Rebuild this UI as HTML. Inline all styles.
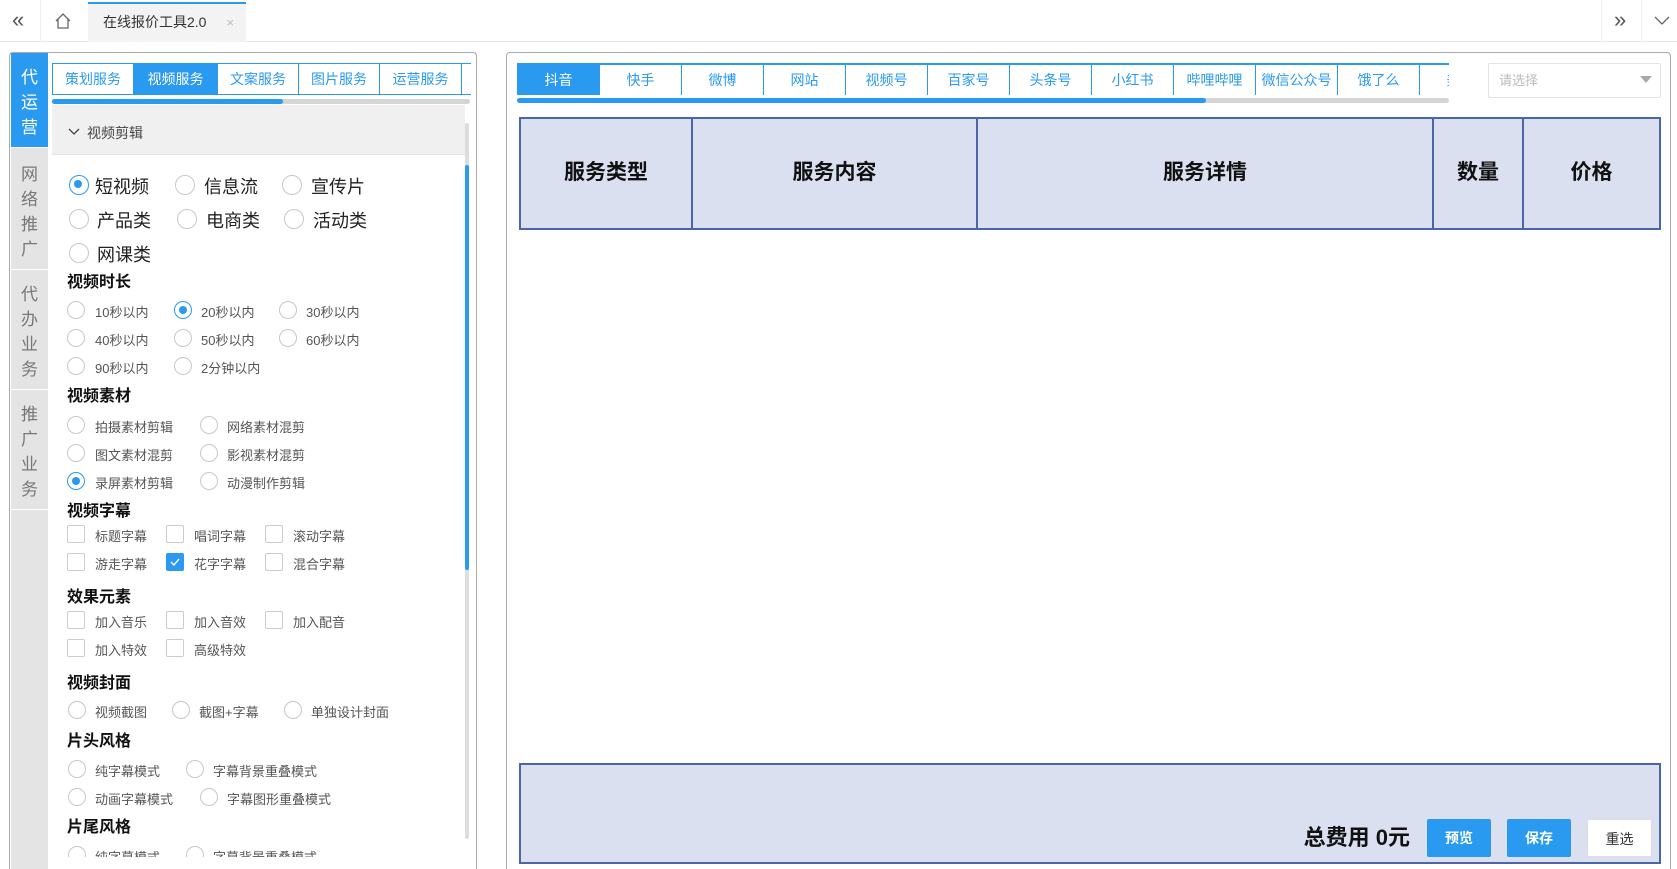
<!DOCTYPE html>
<html style="overflow:hidden;width:1677px;height:869px"><head><meta charset="utf-8"><style>
*{margin:0;padding:0;box-sizing:border-box}
body{width:1677px;height:869px;overflow:hidden;background:#fff;font-family:"Liberation Sans","Noto Sans CJK SC",sans-serif;position:relative;color:#333}
.a{position:absolute}
.top{left:0;top:0;width:1677px;height:42px;border-bottom:1px solid #e8e8e8;background:#fff}
.vl{width:1px;background:#eee;top:0;height:42px}
.tab{left:88px;top:2px;width:158px;height:40px;background:#f3f3f3;border-top:2px solid #2a9af0;font-size:14px;line-height:36px;padding-left:15px;color:#333}
.panel{border:1px solid #aaa;border-bottom:none;border-radius:4px 4px 0 0;background:#fff}
.nav{left:11px;width:37px;background:#e4e4e4;color:#777;font-size:17px;text-align:center;line-height:25px;border-bottom:1px solid #fff}
.lt{top:63px;height:32px;border:1px solid #2a9af0;color:#2a9af0;font-size:14px;text-align:center;line-height:30px;background:#fff}
.rt{flex:0 0 82px;height:32px;border:1px solid #2a9af0;border-left:none;color:#2a9af0;font-size:14px;text-align:center;line-height:30px;background:#fff;width:82px}
.on{background:#2a9af0;color:#fff}
.h{font-size:16px;font-weight:bold;color:#111}
.r{width:18px;height:18px;border:1px solid #c8c8c8;border-radius:50%;background:#fff}
.rs{border-color:#2a9af0}
.rs::after{content:"";position:absolute;left:4px;top:4px;width:8px;height:8px;border-radius:50%;background:#2a9af0}
.c{width:18px;height:18px;border:1px solid #ccc;border-radius:2px;background:#fff}
.t{font-size:13px;color:#555;white-space:nowrap}
.tb{font-size:18px;color:#222;white-space:nowrap}
.th{top:117px;height:113px;background:#dae0f0;border:2px solid #4a66a8;font-size:21px;font-weight:bold;color:#111;text-align:center;line-height:108px}
.btn{top:819px;height:38px;width:64px;background:#2a9af0;color:#fff;font-size:14px;text-align:center;line-height:38px;border-radius:2px;font-weight:bold}
</style></head><body>
<div class="a top"></div>
<div class="a" style="left:12px;top:9px;font-size:22px;color:#555;line-height:22px">«</div>
<div class="a vl" style="left:40px"></div>
<svg class="a" style="left:54px;top:12px" width="18" height="18" viewBox="0 0 18 18"><path d="M2 9 L9 2 L16 9 M4 7 V16 H14 V7" fill="none" stroke="#666" stroke-width="1.3"/></svg>
<div class="a tab">在线报价工具2.0<span style="color:#bbb;margin-left:20px;font-size:13px">×</span></div>
<div class="a vl" style="left:1601px"></div>
<div class="a vl" style="left:1641px"></div>
<div class="a" style="left:1614px;top:9px;font-size:22px;color:#555;line-height:22px">»</div>
<svg class="a" style="left:1654px;top:16px" width="16" height="10"><path d="M1 1 L8 8 L15 1" fill="none" stroke="#666" stroke-width="1.3"/></svg>

<!-- left panel -->
<div class="a panel" style="left:9px;top:52px;width:468px;height:817px"></div>
<div class="a nav" style="top:53px;height:95px;background:#2a9af0;color:#fff;padding-top:12px">代<br>运<br>营</div>
<div class="a nav" style="top:148px;height:122px;padding-top:14px">网<br>络<br>推<br>广</div>
<div class="a nav" style="top:270px;height:120px;padding-top:12px">代<br>办<br>业<br>务</div>
<div class="a nav" style="top:390px;height:120px;padding-top:12px">推<br>广<br>业<br>务</div>
<div class="a nav" style="top:510px;height:359px;border:none"></div>
<div class="a lt" style="left:52px;width:82px">策划服务</div>
<div class="a lt on" style="left:133px;width:85px">视频服务</div>
<div class="a lt" style="left:217px;width:82px">文案服务</div>
<div class="a lt" style="left:298px;width:82px">图片服务</div>
<div class="a lt" style="left:379px;width:83px">运营服务</div>
<div class="a lt" style="left:461px;width:10px;border-right:none"></div>
<div class="a" style="left:52px;top:99px;width:418px;height:5px;background:#d5d5d5;border-radius:3px"></div>
<div class="a" style="left:52px;top:99px;width:231px;height:5px;background:#2a9af0;border-radius:3px"></div>
<div class="a" style="left:52px;top:105px;width:413px;height:50px;background:#f0f0f0;border-bottom:1px solid #e4e4e4"></div>
<svg class="a" style="left:68px;top:128px" width="12" height="8"><path d="M1 1 L6 6 L11 1" fill="none" stroke="#444" stroke-width="1.3"/></svg>
<div class="a" style="left:87px;top:123px;font-size:14px;color:#444">视频剪辑</div>
<div class="a" style="left:465px;top:123px;width:4px;height:716px;background:#ddd;border-radius:2px"></div>
<div class="a" style="left:465px;top:165px;width:4px;height:405px;background:#2a9af0;border-radius:2px"></div>

<div class="a" style="left:0;top:0;width:477px;height:857px;overflow:hidden">
<div class="a r rs" style="left:69px;top:175px;width:20px;height:20px"></div><div class="a tb" style="left:95px;top:173px">短视频</div>
<div class="a r" style="left:175px;top:175px;width:20px;height:20px"></div><div class="a tb" style="left:204px;top:173px">信息流</div>
<div class="a r" style="left:282px;top:175px;width:20px;height:20px"></div><div class="a tb" style="left:311px;top:173px">宣传片</div>
<div class="a r" style="left:69px;top:209px;width:20px;height:20px"></div><div class="a tb" style="left:97px;top:207px">产品类</div>
<div class="a r" style="left:177px;top:209px;width:20px;height:20px"></div><div class="a tb" style="left:206px;top:207px">电商类</div>
<div class="a r" style="left:284px;top:209px;width:20px;height:20px"></div><div class="a tb" style="left:313px;top:207px">活动类</div>
<div class="a r" style="left:69px;top:243px;width:20px;height:20px"></div><div class="a tb" style="left:97px;top:241px">网课类</div>

<div class="a h" style="left:67px;top:268px">视频时长</div>
<div class="a r" style="left:67px;top:301px"></div><div class="a t" style="left:95px;top:302px">10秒以内</div>
<div class="a r rs" style="left:174px;top:301px"></div><div class="a t" style="left:201px;top:302px">20秒以内</div>
<div class="a r" style="left:279px;top:301px"></div><div class="a t" style="left:306px;top:302px">30秒以内</div>
<div class="a r" style="left:67px;top:329px"></div><div class="a t" style="left:95px;top:330px">40秒以内</div>
<div class="a r" style="left:174px;top:329px"></div><div class="a t" style="left:201px;top:330px">50秒以内</div>
<div class="a r" style="left:279px;top:329px"></div><div class="a t" style="left:306px;top:330px">60秒以内</div>
<div class="a r" style="left:67px;top:357px"></div><div class="a t" style="left:95px;top:358px">90秒以内</div>
<div class="a r" style="left:174px;top:357px"></div><div class="a t" style="left:201px;top:358px">2分钟以内</div>

<div class="a h" style="left:67px;top:382px">视频素材</div>
<div class="a r" style="left:67px;top:416px"></div><div class="a t" style="left:95px;top:417px">拍摄素材剪辑</div>
<div class="a r" style="left:200px;top:416px"></div><div class="a t" style="left:227px;top:417px">网络素材混剪</div>
<div class="a r" style="left:67px;top:444px"></div><div class="a t" style="left:95px;top:445px">图文素材混剪</div>
<div class="a r" style="left:200px;top:444px"></div><div class="a t" style="left:227px;top:445px">影视素材混剪</div>
<div class="a r rs" style="left:67px;top:472px"></div><div class="a t" style="left:95px;top:473px">录屏素材剪辑</div>
<div class="a r" style="left:200px;top:472px"></div><div class="a t" style="left:227px;top:473px">动漫制作剪辑</div>

<div class="a h" style="left:67px;top:497px">视频字幕</div>
<div class="a c" style="left:67px;top:525px"></div><div class="a t" style="left:95px;top:526px">标题字幕</div>
<div class="a c" style="left:166px;top:525px"></div><div class="a t" style="left:194px;top:526px">唱词字幕</div>
<div class="a c" style="left:265px;top:525px"></div><div class="a t" style="left:293px;top:526px">滚动字幕</div>
<div class="a c" style="left:67px;top:553px"></div><div class="a t" style="left:95px;top:554px">游走字幕</div>
<div class="a c" style="left:166px;top:553px;background:#2a9af0;border-color:#2a9af0"><svg width="16" height="16" style="position:absolute;left:0;top:0"><path d="M4 8 L7 11 L12 5" fill="none" stroke="#fff" stroke-width="1.4"/></svg></div><div class="a t" style="left:194px;top:554px">花字字幕</div>
<div class="a c" style="left:265px;top:553px"></div><div class="a t" style="left:293px;top:554px">混合字幕</div>

<div class="a h" style="left:67px;top:583px">效果元素</div>
<div class="a c" style="left:67px;top:611px"></div><div class="a t" style="left:95px;top:612px">加入音乐</div>
<div class="a c" style="left:166px;top:611px"></div><div class="a t" style="left:194px;top:612px">加入音效</div>
<div class="a c" style="left:265px;top:611px"></div><div class="a t" style="left:293px;top:612px">加入配音</div>
<div class="a c" style="left:67px;top:639px"></div><div class="a t" style="left:95px;top:640px">加入特效</div>
<div class="a c" style="left:166px;top:639px"></div><div class="a t" style="left:194px;top:640px">高级特效</div>

<div class="a h" style="left:67px;top:669px">视频封面</div>
<div class="a r" style="left:68px;top:701px"></div><div class="a t" style="left:95px;top:702px">视频截图</div>
<div class="a r" style="left:172px;top:701px"></div><div class="a t" style="left:199px;top:702px">截图+字幕</div>
<div class="a r" style="left:284px;top:701px"></div><div class="a t" style="left:311px;top:702px">单独设计封面</div>

<div class="a h" style="left:67px;top:727px">片头风格</div>
<div class="a r" style="left:68px;top:760px"></div><div class="a t" style="left:95px;top:761px">纯字幕模式</div>
<div class="a r" style="left:186px;top:760px"></div><div class="a t" style="left:213px;top:761px">字幕背景重叠模式</div>
<div class="a r" style="left:68px;top:788px"></div><div class="a t" style="left:95px;top:789px">动画字幕模式</div>
<div class="a r" style="left:200px;top:788px"></div><div class="a t" style="left:227px;top:789px">字幕图形重叠模式</div>

<div class="a h" style="left:67px;top:813px">片尾风格</div>
<div class="a r" style="left:68px;top:846px"></div><div class="a t" style="left:95px;top:847px">纯字幕模式</div>
<div class="a r" style="left:186px;top:846px"></div><div class="a t" style="left:213px;top:847px">字幕背景重叠模式</div>
</div>

<!-- right panel -->
<div class="a panel" style="left:506px;top:52px;width:1165px;height:817px"></div>
<div class="a" style="left:517px;top:63px;width:932px;height:32px;overflow:hidden">
<div style="display:flex;width:1200px;border-left:1px solid #2a9af0;border-top:1px solid #2a9af0">
<div class="rt on">抖音</div><div class="rt">快手</div><div class="rt">微博</div><div class="rt">网站</div><div class="rt">视频号</div><div class="rt">百家号</div><div class="rt">头条号</div><div class="rt">小红书</div><div class="rt">哔哩哔哩</div><div class="rt">微信公众号</div><div class="rt">饿了么</div><div class="rt">美团</div>
</div></div>
<div class="a" style="left:517px;top:98px;width:932px;height:5px;background:#d5d5d5;border-radius:3px"></div>
<div class="a" style="left:517px;top:98px;width:689px;height:5px;background:#2a9af0;border-radius:3px"></div>
<div class="a" style="left:1488px;top:63px;width:173px;height:35px;border:1px solid #e4e4e4;border-radius:2px;font-size:13px;color:#bbb;line-height:33px;padding-left:10px">请选择</div>
<div class="a" style="left:1640px;top:76px;width:0;height:0;border-left:6px solid transparent;border-right:6px solid transparent;border-top:7px solid #aaa"></div>

<div class="a th" style="left:519px;width:174px">服务类型</div>
<div class="a th" style="left:691px;width:287px">服务内容</div>
<div class="a th" style="left:976px;width:458px">服务详情</div>
<div class="a th" style="left:1432px;width:92px">数量</div>
<div class="a th" style="left:1522px;width:139px">价格</div>

<div class="a" style="left:519px;top:763px;width:1142px;height:101px;background:#dae0f0;border:2px solid #4a66a8"></div>
<div class="a" style="left:1300px;top:821px;width:110px;text-align:right;font-size:22px;font-weight:bold;color:#111;line-height:34px">总费用 0元</div>
<div class="a btn" style="left:1427px">预览</div>
<div class="a btn" style="left:1507px">保存</div>
<div class="a btn" style="left:1587px;width:65px;background:#fff;color:#333;border:1px solid #ddd;font-weight:normal">重选</div>
</body></html>
